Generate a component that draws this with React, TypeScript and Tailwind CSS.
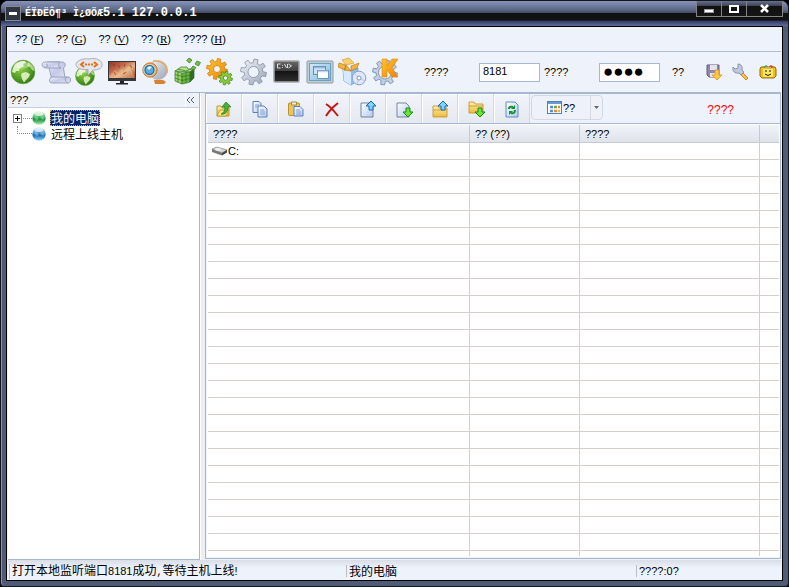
import React, { useState } from "react";
import type { ReactNode } from "react";

const sans = "font-['Liberation_Sans','Noto_Sans_CJK_SC',sans-serif]";
const mono = "font-['Liberation_Mono',monospace]";
const cjk = "font-['Noto_Sans_CJK_SC',sans-serif]";

function Gear({ cx, cy, r, hole, fill, stroke, teeth = 8 }: { cx: number; cy: number; r: number; hole: number; fill: string; stroke: string; teeth?: number }) {
  const step = (Math.PI * 2) / teeth;
  const at = (radius: number, angle: number) => `${(cx + radius * Math.cos(angle)).toFixed(2)} ${(cy + radius * Math.sin(angle)).toFixed(2)}`;
  const outline = Array.from({ length: teeth }, (_, i) => {
    const a = i * step + 0.2;
    return [at(r * 0.72, a - step * 0.3), at(r, a - step * 0.2), at(r, a + step * 0.2), at(r * 0.72, a + step * 0.3)].join(" L");
  }).join(" L");
  const ring = `M${cx - hole} ${cy} a${hole} ${hole} 0 1 0 ${hole * 2} 0 a${hole} ${hole} 0 1 0 ${-hole * 2} 0Z`;
  return <path d={`M${outline}Z ${ring}`} fillRule="evenodd" fill={fill} stroke={stroke} strokeWidth="0.8" strokeLinejoin="round" />;
}

function Defs() {
  return (
    <svg width="0" height="0" className="absolute" aria-hidden="true">
      <defs>
        <radialGradient id="green" cx=".4" cy=".35" r=".7"><stop offset="0" stopColor="#8fcf4a" /><stop offset=".6" stopColor="#559f26" /><stop offset="1" stopColor="#2f7414" /></radialGradient>
        <linearGradient id="scroll" x1="0" y1="0" x2="1" y2="1"><stop offset="0" stopColor="#f2f4fd" /><stop offset=".5" stopColor="#c4cae5" /><stop offset="1" stopColor="#e6e9f6" /></linearGradient>
        <linearGradient id="screen" x1="0" y1="0" x2="1" y2="1"><stop offset="0" stopColor="#8b3827" /><stop offset=".35" stopColor="#c0694a" /><stop offset=".6" stopColor="#e5b58c" /><stop offset="1" stopColor="#8e3a20" /></linearGradient>
        <linearGradient id="orange" x1="0" y1="0" x2="1" y2="1"><stop offset="0" stopColor="#ffc62e" /><stop offset="1" stopColor="#ee8206" /></linearGradient>
        <linearGradient id="silver" x1="0" y1="0" x2="1" y2="1"><stop offset="0" stopColor="#f4f6fa" /><stop offset="1" stopColor="#98a2b5" /></linearGradient>
        <linearGradient id="term" x1="0" y1="0" x2="0" y2="1"><stop offset="0" stopColor="#6a6a6a" /><stop offset=".48" stopColor="#3e3e3e" /><stop offset=".5" stopColor="#151515" /><stop offset="1" stopColor="#303030" /></linearGradient>
        <linearGradient id="sky" x1="0" y1="0" x2="1" y2="1"><stop offset="0" stopColor="#d2ebf7" /><stop offset="1" stopColor="#7fbbdc" /></linearGradient>
        <linearGradient id="folder" x1="0" y1="0" x2="0" y2="1"><stop offset="0" stopColor="#fff3ac" /><stop offset="1" stopColor="#edb93c" /></linearGradient>
        <linearGradient id="paper" x1="0" y1="0" x2="1" y2="1"><stop offset="0" stopColor="#fff" /><stop offset="1" stopColor="#b3caf0" /></linearGradient>
        <linearGradient id="orbG" x1="0" y1="0" x2="0" y2="1"><stop offset="0" stopColor="#e1fae8" /><stop offset=".4" stopColor="#4bbf64" /><stop offset=".58" stopColor="#168b3c" /><stop offset="1" stopColor="#a2f5a5" /></linearGradient>
        <linearGradient id="orbB" x1="0" y1="0" x2="0" y2="1"><stop offset="0" stopColor="#dbefff" /><stop offset=".4" stopColor="#4c9dd8" /><stop offset=".58" stopColor="#1465ae" /><stop offset="1" stopColor="#93dcff" /></linearGradient>
      </defs>
    </svg>
  );
}

function Earth() {
  return (
    <g>
      <circle cx="15" cy="15" r="11.8" fill="url(#green)" stroke="#5d9a3c" strokeWidth=".7" />
      <path d="M5 11 C7 6 12 3.5 17 4 L18 6 15 7 16 9 12 11 11 14 8 14 7 16 4 15Z" fill="#e9f6d2" opacity=".9" />
      <path d="M20 5 C24 7 26 10 26.5 14 L24 13 22 10 19 9Z" fill="#c9e69c" opacity=".8" />
      <path d="M14 16 L18 15 22 17 21 20 18 23 16 25.5 14 22 13 18Z" fill="#e3f3c4" opacity=".9" />
      <ellipse cx="14" cy="8" rx="8" ry="3.5" fill="white" opacity=".35" />
    </g>
  );
}

const mainIcons: { name: string; art: ReactNode }[] = [
  { name: "Globe", art: <Earth /> },
  {
    name: "Script",
    art: (
      <g fill="url(#scroll)" stroke="#8a92b5" strokeWidth=".8">
        <path d="M6 5 H21 C25 5 25 9 22.5 11 L24 21 L10 24 C11 18 8 14 8 10Z" />
        <path d="M4 5 H19 C17 7 17 11 20 11 H5 C0 11 0 5 4 5Z" />
        <path d="M5 7 C7 7 7 10 5 10" fill="none" />
        <path d="M12 20 H27 C31 20 30 26 27 26 H11 C7 26 8 20 12 20Z" />
        <path d="M26 20 C23 21 24 25 27 26" fill="none" />
      </g>
    ),
  },
  {
    name: "Connect",
    art: (
      <g>
        <g transform="translate(-1 7) scale(.8)"><Earth /></g>
        <path d="M15 2 C22 0 29 4 28 8 C28 12 23 13 19 13 L14 18 14 12.5 C7 13 2 11 2 7.5 C2 4 8 1 15 2Z" fill="#e4e6ec" stroke="#a4a8b4" strokeWidth=".9" />
        <path d="M10 5 L7 7.5 10 10 M20 5 L23 7.5 20 10" fill="none" stroke="#e96f12" strokeWidth="2" />
        <path d="M11 7.5h2m1 0h2m1 0h2" stroke="#e87518" strokeWidth="2" />
      </g>
    ),
  },
  {
    name: "Screen",
    art: (
      <g>
        <rect x="1" y="4" width="28" height="20" fill="#34363a" />
        <rect x="2" y="5" width="26" height="16" fill="url(#screen)" />
        <path d="M3 18 L8 13 11 16 14 12 17 14 21 9 25 14 28 21H2Z" fill="#f5c28d" opacity=".4" />
        <path d="M6 7l2 2M11 8l2 3M18 7l-1 3M23 8l2 3M7 15l2 3M16 17l3-2" stroke="#8e311e" strokeWidth="1.2" opacity=".55" />
        <path d="M13 24h4v2h4v1.5H9V26h4Z" fill="#202428" />
      </g>
    ),
  },
  {
    name: "Webcam",
    art: (
      <g>
        <path d="M14 23h9l3 2-2 2h-9Z" fill="#d88231" />
        <circle cx="18" cy="13" r="9.5" fill="url(#silver)" stroke="#c1b4ac" strokeWidth=".8" />
        <path d="M13 4 C21 3 28 8 27 16" fill="none" stroke="#eaa65c" strokeWidth="1.3" />
        <circle cx="10" cy="13" r="7.2" fill="#f2a73f" stroke="#bc6b1e" strokeWidth=".8" />
        <circle cx="9.5" cy="13" r="5.6" fill="#2d6f9d" stroke="#dceaf2" strokeWidth=".8" />
        <circle cx="9.5" cy="13" r="3.8" fill="#5aaedb" />
        <path d="M7 11q2-3 5-1l-3 3z" fill="#ddf7ff" />
      </g>
    ),
  },
  {
    name: "Registry",
    art: (
      <g stroke="#39712a" strokeWidth=".7">
        <path d="M2 14 L8 10 H14 L15 12 H21 L17 15Z" fill="#b3e486" />
        <path d="M2 14 L9 16 V27 L2 24Z" fill="#9bd764" />
        <path d="M9 16 L17 15 V25 L9 27Z" fill="#68b63d" />
        <path d="M17 15l4-3v9l-4 4Z" fill="#2d6a20" />
        <path d="M2 17.5l7 2 8-1 4-4M2 21l7 2.5 8-2 4-4M5 15v10.500M13 15.500v11M5 12l8 2 5-2" fill="none" stroke="#34702a" />
        <path d="m16 1 3 2-2.500 3-3-2.500ZM24 4l3.500 1.500-2 3.500-3.500-2ZM20 9l3 1.500-2 2.500-3-1.500Z" fill="#70c341" />
      </g>
    ),
  },
  { name: "Services", art: <g><Gear cx={11} cy={12} r={10.5} hole={3.5} fill="url(#orange)" stroke="#cf7c0c" /><Gear cx={19.500} cy={21} r={7} hole={2.2} fill="#8ccb3a" stroke="#478922" /></g> },
  { name: "Settings", art: <Gear cx={14.5} cy={15} r={13} hole={5.5} fill="url(#silver)" stroke="#8790a2" /> },
  {
    name: "Terminal",
    art: (
      <g>
        <rect x="2" y="4" width="25" height="21" rx="1" fill="url(#term)" stroke="#a5a5a5" strokeWidth="1.500" />
        <path d="M8.500 7H5.500v4h3M10.500 8v.8M10.500 10v.8M12.500 7l2 4M15.500 7v4M16.500 7l3 2-3 2" fill="none" stroke="white" strokeWidth=".8" />
      </g>
    ),
  },
  {
    name: "Windows",
    art: (
      <g>
        <rect x="2" y="4" width="26" height="22" rx="1" fill="#c2cdd3" stroke="#8f9ea6" />
        <rect x="4.500" y="6.500" width="21" height="17" fill="url(#sky)" stroke="#67a2bf" />
        <rect x="8.500" y="9.500" width="12" height="8" fill="#cfe2f4" stroke="#6689b5" />
        <path d="M9 10.500h11" stroke="#91b7d9" strokeWidth="1.500" />
        <rect x="12.500" y="13.500" width="11" height="8" fill="white" stroke="#6f95bd" />
        <path d="M13 14.500h10" stroke="#bfd6ef" strokeWidth="1.500" />
      </g>
    ),
  },
  {
    name: "Software",
    art: (
      <g>
        <path d="M5 12 13 14 20 11 19 24 13 28 6 24Z" fill="#8fbcf2" stroke="#6595cd" strokeWidth=".8" />
        <path d="M13 14v14l-7-4-1-12Z" fill="#d5eafd" />
        <path d="M1 6 8 8 7 13 0 10ZM8 8 13 14 6 13ZM13 9 21 6 19 11 13 14Z" fill="#f5b43d" stroke="#b77c20" strokeWidth=".7" />
        <path d="M4 3 11 1 16 6 8 8Z" fill="#ffd06a" stroke="#d59c35" strokeWidth=".7" />
        <circle cx="21" cy="21" r="6.800" fill="#dfe9fb" stroke="#8ba0c8" />
        <path d="M21 21 16 16 M21 21l6 3M21 21l-2 6" stroke="#b7c6df" />
        <circle cx="21" cy="21" r="2" fill="white" stroke="#8096c1" />
      </g>
    ),
  },
  {
    name: "Keyboard control",
    art: (
      <g>
        <Gear cx={14} cy={15.500} r={12.500} hole={6.500} fill="#c3cfe3" stroke="#6d86ad" />
        <path d="M11 2h5v7l5-7h6l-6 9 6 9h-6l-5-7v7h-5Z" fill="url(#orange)" stroke="#e08a18" strokeWidth=".6" />
      </g>
    ),
  },
];

const upBlue = "m12 1 5 5h-3v4h-4V6H7Z";
const downGreen = "m13 17-5-5h3V8h4v4h3Z";
function Folder({ y = 5 }: { y?: number }) {
  return <path d={`M2 ${y}h5l1 2h8v9H2Z M2 ${y + 4}h14`} fill="url(#folder)" stroke="#c99432" strokeWidth=".9" />;
}
const page = <path d="M2 3h9l3 3v11H2Z" fill="url(#paper)" stroke="#75829f" />;

const fileIcons: { name: string; art: ReactNode }[] = [
  { name: "Up one level", art: <g><path d="M2 6h4l1 2h7v8H2Z" fill="url(#folder)" stroke="#b59127" strokeWidth=".9" /><path d="m2 16 3-6h9l-3 6Z" fill="#ffe785" stroke="#b59127" strokeWidth=".8" /><path d="M6 14c3-1 4-4 4-7H7l4-5 5 5h-3c0 5-3 8-7 7Z" fill="#48b52e" stroke="#20721a" strokeWidth=".7" /></g> },
  { name: "Copy", art: <g fill="url(#paper)" stroke="#5b80bf"><path d="M2 1.500h6l2 2v9H2Z" /><path d="M7 6h6l3 3v8H7Z" /><path d="M4 5h4M4 7h3M9 10h4M9 12h5M9 14h5" stroke="#7ea0d6" /></g> },
  { name: "Paste", art: <g><rect x="1.500" y="3" width="11" height="12.500" rx="1" fill="#edc55b" stroke="#b8922e" /><path d="M4.500 2h5v3h-5Z" fill="#fbf3cf" stroke="#a08a4a" /><path d="M7 6.500h6l3 3V16H7Z" fill="url(#paper)" stroke="#5b80bf" /><path d="M9 10h4M9 12h5M9 14h5" stroke="#7ea0d6" /></g> },
  { name: "Delete", art: <path d="M3 4C8 7 11 11 15 16M15 3C10 7 6 11 3 16" fill="none" stroke="#c81414" strokeWidth="2" /> },
  { name: "Upload file", art: <g>{page}<path d={upBlue} fill="#7fd4ff" stroke="#1266b9" /></g> },
  { name: "Download file", art: <g>{page}<path d={downGreen} fill="#6ee238" stroke="#168916" /></g> },
  { name: "Upload folder", art: <g><Folder y={6} /><path d={upBlue} fill="#7fd4ff" stroke="#1466b0" /></g> },
  { name: "Download folder", art: <g><Folder y={2} /><path d={downGreen} fill="#6ee238" stroke="#168916" /></g> },
  { name: "Refresh", art: <g><path d="M3 2h9l3 3v12H3Z" fill="url(#paper)" stroke="#648bc6" /><path d="M6 9q0-3 4-2M12 10q0 4-4 3" stroke="#14952a" strokeWidth="2" fill="none" /><path d="M12 5v4H8ZM6 15v-4h4Z" fill="#14952a" /></g> },
];

function Orb({ color }: { color: string }) {
  return (
    <svg width="14" height="14" viewBox="0 0 14 14" className="shrink-0" aria-hidden="true">
      <circle cx="7" cy="7" r="6.7" fill={color} />
      <path d="M2 6l2-1 2 1 1 2-2 1v1L3 8M8 6l3-1 2 2-2 2-2-1" fill="#eaffff" opacity=".3" />
      <ellipse cx="7" cy="3" rx="4.5" ry="2" fill="white" opacity=".6" />
    </svg>
  );
}

function ToolButton({ name, children }: { name: string; children: ReactNode }) {
  return <button type="button" aria-label={name} className="flex h-8 w-[27px] items-center justify-center">{children}</button>;
}

const menus = [["??", "F"], ["??", "G"], ["??", "V"], ["??", "R"], ["????", "H"]];
const cell = "h-[17px] border-r border-b border-[#d4d0c8] p-0";
const headCell = "h-[18px] truncate border-r border-b border-[#c5cad3] p-0 pl-[5px] text-left font-normal leading-4";

export default function App() {
  const [port, setPort] = useState("8181");
  const [password, setPassword] = useState("●●●●");
  return (
    <main className={`h-screen bg-black text-[11px] leading-3 text-black ${sans}`}>
      <Defs />
      <div className="flex h-full flex-col overflow-hidden rounded-t-lg rounded-b border border-[#15151e] bg-[#505b78] pr-[5px] pb-[5px] pl-[5px] shadow-[inset_1px_0_#8790b0]">
        <header className="-mx-[5px] flex h-[25px] shrink-0 justify-between bg-[linear-gradient(#8794b9_0%,#5c6888_35%,#454e65_46%,#111_48%,#111_76%,#35406c_82%,#606b98_100%)] pl-1">
          <div className="flex h-6 items-center">
            <button type="button" aria-label="Window menu" className="mr-1 flex h-[15px] w-4 items-center justify-center border border-[#888] bg-[#303642]"><span className="h-[3px] w-2 bg-white" /></button>
            <h1 className={`flex items-baseline font-bold whitespace-pre text-white ${mono}`}><span className="text-[10px]">ÉÏÐËÔ¶³ Ì¿ØÖÆ</span><span className="text-xs">5.1 127.0.0.1</span></h1>
          </div>
          <div className="mr-[5px] flex h-4 border border-t-0 border-[#83838a] bg-[linear-gradient(#65708c,#404657_30%,#111_35%,#151515)]">
            <button type="button" aria-label="Minimize" className="flex w-[25px] items-center justify-center border-r border-[#83838a]"><span className="mt-1 h-1 w-2.5 border border-[#99a] bg-white" /></button>
            <button type="button" aria-label="Maximize" className="flex w-[25px] items-center justify-center border-r border-[#83838a]"><span className="h-2 w-2.5 border-2 border-white" /></button>
            <button type="button" aria-label="Close" className="flex w-[35px] items-center justify-center"><svg width="11" height="9" viewBox="0 0 11 9"><path d="M2 1l7 7M9 1L2 8" stroke="white" strokeWidth="2.6" /></svg></button>
          </div>
        </header>

        <div className="flex min-h-0 flex-1 flex-col border border-black bg-[#eef2fa] px-px">
          <nav className="flex h-[25px] shrink-0 items-center gap-3 border-b border-[#aebdcf] pl-[7px]">
            {menus.map(([label, key]) => <button type="button" key={key}>{label} (<u className="font-['Liberation_Serif',serif]">{key}</u>)</button>)}
          </nav>

          <div className="flex h-[41px] shrink-0 items-center border-b border-[#a5b8cf]">
            {mainIcons.map((icon) => (
              <button type="button" aria-label={icon.name} key={icon.name} className="w-[33px] shrink-0">
                <svg width="30" height="30" viewBox="0 0 30 30">{icon.art}</svg>
              </button>
            ))}
            <label htmlFor="port" className="ml-5 w-[55px] shrink-0">????</label>
            <input id="port" value={port} onChange={(e) => setPort(e.target.value)} className="h-[19px] w-[61px] border border-[#a5b8cf] bg-white px-[3px] pb-0.5 outline-none" />
            <label htmlFor="password" className="ml-1 w-[55px] shrink-0">????</label>
            <input id="password" value={password} onChange={(e) => setPassword(e.target.value)} className="h-[19px] w-[61px] border border-[#a5b8cf] bg-white px-[3px] font-['Liberation_Mono',monospace] text-[17px] leading-4 outline-none" />
            <button type="button" className="ml-3">??</button>
            <div className="ml-auto flex">
              <ToolButton name="Save"><svg width="18" height="18" viewBox="0 0 18 18"><path d="M2 2h12v12H4l-2-2Z" fill="#8f88ac" stroke="#655d85" /><path d="M5 2h7v5H5ZM5 10h7v4H5Z" fill="#e4e2ee" /><path d="M10 7h4v5h3l-5 5-5-5h3Z" fill="#ffc83f" stroke="#d9962a" strokeWidth=".8" /></svg></ToolButton>
              <ToolButton name="Tools"><svg width="18" height="18" viewBox="0 0 18 18"><path d="m9 8 7 7-2 2-7-7Z" fill="#ffc147" stroke="#bd7417" strokeWidth=".8" /><path d="M6 1v4L3 6 1 4c-1 4 2 7 6 6l2 2 3-3-2-2c1-3-1-6-4-6Z" fill="#c1c8db" stroke="#7883a0" strokeWidth=".8" /></svg></ToolButton>
              <ToolButton name="About"><svg width="18" height="18" viewBox="0 0 18 18"><path d="m4 4 3-2 3 2" fill="#4baf49" /><path d="m9 4 3-2 3 2" fill="#e93c28" /><path d="M1 6l1-2h3l1 1h6l1-1h3l1 2v7l-2 2H3l-2-2Z" fill="#f0bd20" stroke="#8b6b0c" /><rect x="4" y="5.500" width="10" height="8.500" rx="1" fill="#ffe766" /><path d="M7 7v2m4-2v2M6 11q3 3 6 0" stroke="#1a1a0a" fill="none" /></svg></ToolButton>
            </div>
          </div>

          <div className="flex min-h-0 flex-1">
            <aside className="flex w-48 shrink-0 flex-col border-r border-b border-[#a5b8cf] bg-white">
              <div className="flex h-[15px] shrink-0 items-center justify-between border-b border-[#c5d0dd] bg-[#edf1f8] pl-0.5">
                <span>???</span>
                <button type="button" aria-label="Collapse panel" className="flex h-full w-[14px] items-center border-l border-white"><svg width="10" height="8" viewBox="0 0 10 8"><path d="M4 1 1 4l3 3M8 1 5 4l3 3" fill="none" stroke="#555d6a" /></svg></button>
              </div>
              <ul className={`pt-0.5 text-xs leading-4 ${cjk}`}>
                <li className="flex h-4 items-center pl-[5px]">
                  <button type="button" aria-label="Expand" className="flex size-[9px] items-center justify-center border border-[#808080]"><svg width="5" height="5"><path d="M0 2.5h5M2.5 0v5" stroke="black" /></svg></button>
                  <span className="ml-px w-[9px] border-t border-dotted border-[#888]" />
                  <Orb color="url(#orbG)" />
                  <button type="button" className="ml-1 h-4 border border-dotted border-[#d6a845] bg-[#0a246a] leading-[14px] text-white">我的电脑</button>
                </li>
                <li className="flex h-4 items-center pl-[9px]">
                  <span className="h-2 w-[15px] self-start border-b border-l border-dotted border-[#888]" />
                  <Orb color="url(#orbB)" />
                  <button type="button" className="ml-[5px]">远程上线主机</button>
                </li>
              </ul>
            </aside>
            <div className="w-[5px] shrink-0 border-l border-white bg-[#eeeef0]" />
            <section className="mb-px flex min-w-0 flex-1 flex-col border border-[#a5b8cf]">
              <div className="flex h-[30px] shrink-0 items-start border-b border-[#a5b8cf]">
                {fileIcons.map((icon) => (
                  <button type="button" aria-label={icon.name} key={icon.name} className="flex h-[29px] w-9 shrink-0 items-center justify-center border-r border-[#d3d9e3] bg-linear-to-b from-[#f1f4fa] to-[#e4e8ef] shadow-[inset_1px_1px_white]">
                    <svg width="18" height="18" viewBox="0 0 18 18">{icon.art}</svg>
                  </button>
                ))}
                <div className="mt-px ml-px flex h-[25px] rounded-sm border border-[#d3d9e3] bg-[#eef2f8]">
                  <button type="button" className="flex w-[59px] items-center justify-center border-r border-[#d3d9e3]">
                    <svg width="16" height="14" viewBox="0 0 16 14"><rect x=".5" y=".5" width="14" height="12" fill="white" stroke="#4e7fbe" /><path d="M1 2h13" stroke="#6b9bd7" strokeWidth="2" /><path d="M3 6h3M3 10h3" stroke="#538bcc" strokeWidth="2.5" /><path d="M7 6h3" stroke="#65ad4d" strokeWidth="2.5" /><path d="M7 10h3M11 6h2" stroke="#e8863c" strokeWidth="2.5" /><path d="M11 10h2" stroke="#e5b83c" strokeWidth="2.5" /></svg>
                    <span>??</span>
                  </button>
                  <button type="button" aria-label="View options" className="flex w-[11px] items-center justify-center"><svg width="5" height="3"><path d="M0 0h5L2.5 3Z" fill="#606770" /></svg></button>
                </div>
                <span className="mt-2 mr-[46px] ml-auto text-xs text-[#ff0000]">????</span>
              </div>
              <div className="mb-px ml-px min-h-0 flex-1 overflow-hidden border border-white bg-white">
                <table className="w-full table-fixed border-separate border-spacing-0">
                  <colgroup><col className="w-[262px]" /><col className="w-[110px]" /><col /><col className="w-[19px]" /></colgroup>
                  <thead className="bg-linear-to-b from-[#f0f4f9] to-[#dfe3e9]">
                    <tr>
                      <th className={headCell}>????</th>
                      <th className={headCell}>?? (??)</th>
                      <th className={headCell}>????</th>
                      <th aria-label="Extra" className="border-b border-[#c5cad3] p-0" />
                    </tr>
                  </thead>
                  <tbody>
                    <tr>
                      <td className={cell}>
                        <div className="flex items-center pl-[3px]">
                          <svg width="17" height="12" viewBox="0 0 17 12"><path d="m1 4 5-2 10 3-5 3Z" fill="#d4d4d4" stroke="#888" strokeWidth=".7" /><path d="m1 4 10 4v2.500L1 7Z" fill="#777" /><path d="m11 8 5-3v2.500l-5 3Z" fill="#444" /><ellipse cx="7" cy="4.500" rx="3" ry="1.200" fill="#f5f5f5" /></svg>
                          <span>C:</span>
                        </div>
                      </td>
                      <td className={cell} /><td className={cell} /><td className="border-b border-[#d4d0c8] p-0" />
                    </tr>
                    {Array.from({ length: 24 }, (_, i) => (
                      <tr key={i}><td className={cell} /><td className={cell} /><td className={cell} /><td className="border-b border-[#d4d0c8] p-0" /></tr>
                    ))}
                  </tbody>
                </table>
              </div>
            </section>
          </div>

          <footer className="flex h-5 shrink-0 items-center bg-linear-to-b from-[#d9dde5] to-[#eef2fa] to-40% pt-0.5">
            <div className="ml-px flex w-[337px] items-center border-l border-[#b9bec6] pl-0.5 whitespace-nowrap">
              <p className={`text-xs leading-3 ${cjk}`}>打开本地监听端口<span className={`text-[11px] ${sans}`}>8181</span>成功<span className={`text-[10px] ${mono}`}>,</span>等待主机上线<span className={`text-[11px] ${sans}`}>!</span></p>
            </div>
            <p className={`flex-1 border-l border-[#b9bec6] pl-0.5 text-xs leading-3 ${cjk}`}>我的电脑</p>
            <p className="w-[145px] border-l border-[#b9bec6] pl-0.5">????:0?</p>
          </footer>
        </div>
      </div>
    </main>
  );
}
